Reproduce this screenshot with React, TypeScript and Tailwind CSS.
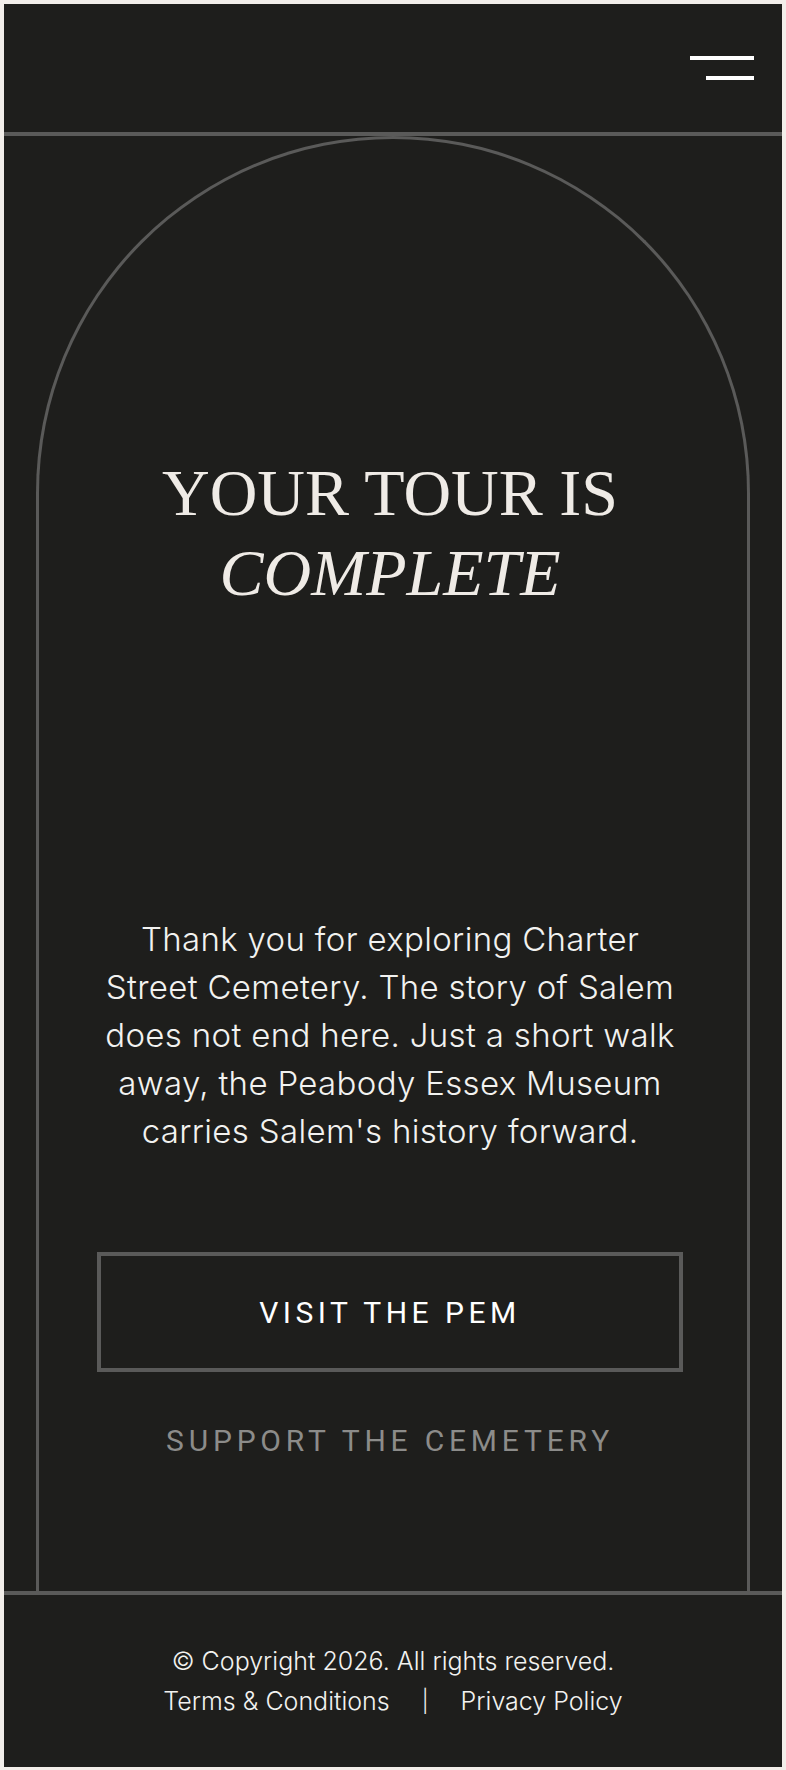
import React from "react";

const sans = { fontFamily: "Roboto, 'Liberation Sans', sans-serif" };
const body = { fontFamily: "Inter, 'Liberation Sans', sans-serif" };

const App: React.FC = () => {
  return (
    <div className="min-h-[1770px] bg-[#f2eeea] p-[4px]" style={sans}>
      <div className="flex min-h-[1762px] flex-col bg-[#1e1e1c]">
        {/* Header */}
        <header className="flex h-[132px] items-center justify-end border-b-[4px] border-[#5a5a59] pr-[28px]">
          <button type="button" aria-label="Menu" className="flex flex-col items-end gap-[16px]">
            <span className="block h-[4px] w-[64px] bg-white" />
            <span className="block h-[4px] w-[48px] bg-white" />
          </button>
        </header>

        {/* Arch */}
        <main className="flex flex-1 px-[32px]">
          <div className="flex w-full flex-col items-center rounded-t-full border-[3px] border-b-0 border-[#5a5a59] pt-[314px] pr-[6px] pb-[130px]">
            <h1
              className="text-center text-[66px] leading-[80px] text-[#efebe6]"
              style={{ fontFamily: "'Liberation Serif', serif" }}
            >
              YOUR TOUR IS
              <br />
              <em className="italic">COMPLETE</em>
            </h1>

            <p
              className="mt-[302px] whitespace-nowrap text-center text-[33px] font-light leading-[48px] tracking-[0.01em] text-[#f2f2f0]"
              style={body}
            >
              Thank you for exploring Charter
              <br />
              Street Cemetery. The story of Salem
              <br />
              does not end here. Just a short walk
              <br />
              away, the Peabody Essex Museum
              <br />
              carries Salem's history forward.
            </p>

            <a
              href="#"
              className="mt-[97px] flex h-[120px] w-[586px] items-center justify-center border-[4px] border-[#5a5a59] text-[30px] tracking-[0.15em] text-white"
            >
              VISIT THE PEM
            </a>

            <a
              href="#"
              className="mt-[49px] text-[30px] leading-[40px] tracking-[0.16em] text-[#8c8c8a]"
            >
              SUPPORT THE CEMETERY
            </a>
          </div>
        </main>

        {/* Footer */}
        <footer
          className="flex flex-col items-center border-t-[4px] border-[#5a5a59] py-[46px] text-[25px] font-light leading-[40px] text-[#f2f2f0]"
          style={body}
        >
          <p>© Copyright 2026. All rights reserved.</p>
          <div className="flex items-center gap-[32px]">
            <a href="#">Terms &amp; Conditions</a>
            <span className="text-[22px]">|</span>
            <a href="#">Privacy Policy</a>
          </div>
        </footer>
      </div>
    </div>
  );
};

export default App;
